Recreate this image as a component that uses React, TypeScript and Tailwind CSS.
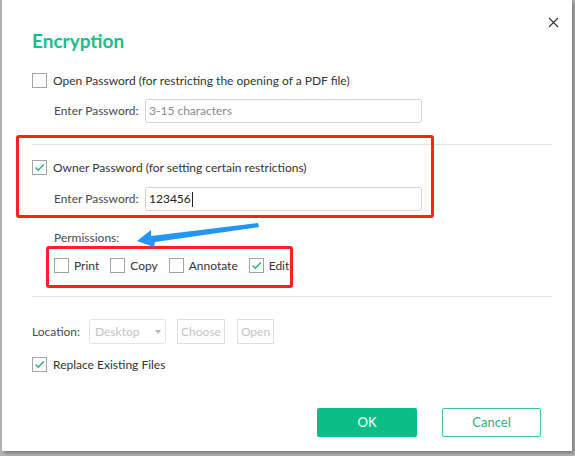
import React from "react";

const font = { fontFamily: 'Lato, "Noto Sans", Arial, sans-serif' };

function Check({ checked }: { checked?: boolean }) {
  return (
    <span className="flex h-[15px] w-[15px] shrink-0 items-center justify-center border border-[#a3a3a3] bg-white">
      {checked && (
        <svg width="11" height="9" viewBox="0 0 11 9" fill="none" aria-hidden>
          <path d="M1.5 4.5 4.2 7.2 9.8 1.5" stroke="#22b46a" strokeWidth="1.4" />
        </svg>
      )}
    </span>
  );
}

function PasswordRow({ value, placeholder }: { value?: string; placeholder?: string }) {
  return (
    <div className="flex h-[24px] items-center pl-[22px]">
      <span className="w-[91px] whitespace-nowrap text-[#4a4a4a]">Enter Password:</span>
      <div className="flex h-[24px] w-[277px] items-center rounded-[3px] border border-[#d4d4d4] px-[3px]">
        {value ? (
          <>
            <span className="text-[#222]">{value}</span>
            <span className="ml-px h-[15px] w-px bg-[#222]" />
          </>
        ) : (
          <span className="text-[#8a8a8a]">{placeholder}</span>
        )}
      </div>
    </div>
  );
}

export default function App() {
  return (
    <div className="h-[456px] w-[575px] bg-[#b4b4b4]" style={font}>
      <div className="relative ml-[2px] flex h-[451px] w-[570px] flex-col bg-white pl-[30px] pr-[20px] pt-[1px] text-[12px] text-[#333] shadow-[2px_2px_4px_rgba(0,0,0,0.35)]">
        <svg className="absolute left-[546px] top-[17px]" width="11" height="11" viewBox="0 0 11 11" aria-hidden>
          <path d="M1 1 10 10M10 1 1 10" stroke="#333" strokeWidth="1.1" />
        </svg>

        <div className="mt-[29px] h-[22px] text-[19px] font-bold leading-[22px] text-[#1abc8a]">Encryption</div>

        <div className="mt-[21px] flex h-[15px] items-center gap-[6px]">
          <Check />
          <span>Open Password (for restricting the opening of a PDF file)</span>
        </div>
        <div className="mt-[11px]">
          <PasswordRow placeholder="3-15 characters" />
        </div>

        <div className="mt-[21px] h-px bg-[#e3e3e3]" />

        <div className="mt-[15px] flex h-[15px] items-center gap-[6px]">
          <Check checked />
          <span>Owner Password (for setting certain restrictions)</span>
        </div>
        <div className="mt-[12px]">
          <PasswordRow value="123456" />
        </div>

        <div className="mt-[19px] h-[16px] pl-[22px] leading-[16px] text-[#4a4a4a]">Permissions:</div>
        <div className="mt-[12px] flex h-[15px] items-center pl-[22px]">
          <Check />
          <span className="ml-[5px] mr-[11px]">Print</span>
          <Check />
          <span className="ml-[5px] mr-[11px]">Copy</span>
          <Check />
          <span className="ml-[5px] mr-[11px]">Annotate</span>
          <Check checked />
          <span className="ml-[5px]">Edit</span>
        </div>

        <div className="mt-[23px] h-px bg-[#e3e3e3]" />

        <div className="mt-[22px] flex h-[25px] items-center">
          <span className="w-[57px] text-[#4a4a4a]">Location:</span>
          <div className="flex h-[25px] w-[77px] items-center justify-between rounded-[3px] border border-[#e3e3e3] pl-[5px] pr-[4px] text-[#c4c4c4]">
            <span>Desktop</span>
            <svg width="6" height="4" viewBox="0 0 6 4" aria-hidden>
              <path d="M0 0h6L3 4z" fill="#b8b8b8" />
            </svg>
          </div>
          <div className="ml-[11px] flex h-[25px] w-[48px] items-center justify-center border border-[#e0e0e0] text-[#c4c4c4]">Choose</div>
          <div className="ml-[12px] flex h-[25px] w-[37px] items-center justify-center border border-[#e0e0e0] text-[#c4c4c4]">Open</div>
        </div>

        <div className="mt-[13px] flex h-[15px] items-center gap-[6px]">
          <Check checked />
          <span>Replace Existing Files</span>
        </div>

        <div className="mr-[11px] mt-[36px] flex justify-end gap-[25px] text-[13px]">
          <button type="button" className="h-[29px] w-[100px] rounded-[2px] bg-[#0cbd88] text-white">OK</button>
          <button type="button" className="h-[29px] w-[99px] rounded-[2px] border border-[#3cc79b] bg-white text-[#1ab58a]">Cancel</button>
        </div>

        <div className="pointer-events-none absolute left-[14px] top-[135px] h-[83px] w-[418px] rounded-[3px] border-[3px] border-[#ff1f1f]" />
        <div className="pointer-events-none absolute left-[44px] top-[246px] h-[42px] w-[247px] rounded-[3px] border-[3px] border-[#ff1f1f]" />
        <svg className="pointer-events-none absolute left-0 top-0" width="570" height="451" aria-hidden>
          <polygon points="135,241 149,230 149,236 256,223 257,227 153,242 152,247" fill="#2196f3" />
        </svg>
      </div>
    </div>
  );
}
